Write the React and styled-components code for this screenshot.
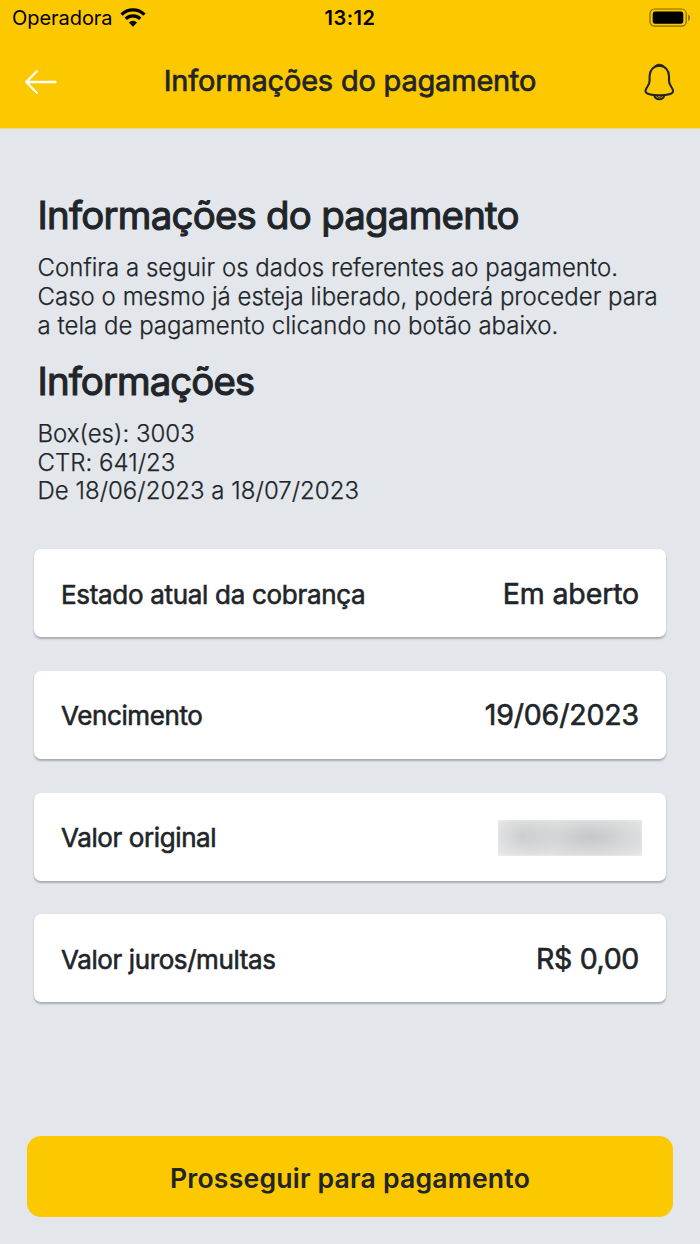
import React from "react";
import styled, { createGlobalStyle } from "styled-components";

const Global = createGlobalStyle`
  * { box-sizing: border-box; }
  body { margin: 0; background: #e3e7ec; }
`;

const Screen = styled.div`
  width: 700px;
  height: 1244px;
  display: flex;
  flex-direction: column;
  overflow: hidden;
  background: #e3e7ec;
  color: #212529;
  font-family: Inter, "Liberation Sans", sans-serif;
  white-space: nowrap;
`;

const Top = styled.header`
  height: 128px;
  flex: none;
  background: #fcc800;
  box-shadow: 0 1px 0 #f1dc8b;
`;

const StatusBar = styled.div`
  height: 36px;
  padding: 0 9px 0 12px;
  display: grid;
  grid-template-columns: 1fr auto 1fr;
  align-items: center;
  color: #000;
`;

const Carrier = styled.div`
  display: flex;
  align-items: center;
  gap: 7.5px;
  font-size: 20px;
  letter-spacing: -0.05px;
`;

const Clock = styled.div`
  font-size: 20px;
  font-weight: 600;
  letter-spacing: 0.5px;
  margin-right: 3px;
`;

const BatterySlot = styled.div`
  display: flex;
  justify-content: flex-end;
`;

const NavBar = styled.div`
  height: 92px;
  padding: 0 24px;
  display: grid;
  grid-template-columns: 36px 1fr 36px;
  align-items: center;
  svg { display: block; }
`;

const NavTitle = styled.div`
  text-align: center;
  font-size: 29px;
  line-height: 36px;
  padding-bottom: 2px;
  -webkit-text-stroke: 0.7px;
  letter-spacing: -0.2px;
`;

const Content = styled.main`
  padding: 62px 34px 0;
`;

const Intro = styled.section`
  padding: 0 3.5px;
`;

const Heading = styled.h1`
  margin: 0;
  font-size: 38.4px;
  line-height: 50px;
  font-weight: 400;
  -webkit-text-stroke: 1.1px;
  letter-spacing: ${(p) => p.$spacing || -0.76}px;
`;

const Copy = styled.p`
  margin: 14.1px 0 15.2px;
  font-size: 24px;
  line-height: 28.8px;
  font-weight: 300;
  -webkit-text-stroke: 0.25px;
  letter-spacing: 0.02px;
`;

const Cards = styled.section`
  margin-top: 43.2px;
  display: flex;
  flex-direction: column;
  gap: 33.6px;
`;

const Card = styled.div`
  height: 88px;
  padding: 0 27px;
  display: flex;
  align-items: center;
  justify-content: space-between;
  background: #fff;
  border-radius: 7px;
  box-shadow: 0 1.5px 2px rgba(0, 0, 0, 0.26);
`;

const Label = styled.span`
  font-size: 26px;
  line-height: 34px;
  -webkit-text-stroke: 0.6px;
  letter-spacing: ${(p) => p.$spacing || -0.4}px;
  padding-top: 3px;
`;

const Value = styled.span`
  font-size: 28.5px;
  line-height: 34px;
  -webkit-text-stroke: 0.6px;
  letter-spacing: ${(p) => p.$spacing || -0.15}px;
  padding-top: 1px;
`;

const Redacted = styled.span`
  width: 144px;
  height: 36px;
  margin: 2px -3px 0 0;
  background:
    radial-gradient(ellipse 38px 28px at 24px 16px, rgba(190, 194, 196, 0.65), rgba(190, 194, 196, 0)),
    radial-gradient(ellipse 82px 30px at 92px 17px, rgba(190, 194, 196, 0.85), rgba(190, 194, 196, 0)),
    #eaebeb;
  box-shadow: inset 0 0 2px #f4f4f4;
`;

const Footer = styled.footer`
  margin-top: auto;
  padding: 0 27px 27px;
`;

const Submit = styled.button`
  display: block;
  width: 100%;
  height: 81.5px;
  padding: 3px 0 0;
  border: 0;
  border-radius: 14px;
  background: #fcc800;
  color: #212529;
  font: 600 26.6px/32px Inter, "Liberation Sans", sans-serif;
  letter-spacing: 0.2px;
`;

const Wifi = () => (
  <svg width="26" height="20" viewBox="0 0 26 20">
    <g fill="none" stroke="#000" strokeWidth="3.3">
      <path d="M1.5 6.6a16.3 16.3 0 0 1 23 0" />
      <path d="M5.7 10.8a10.4 10.4 0 0 1 14.6 0" />
    </g>
    <path d="M8.9 14.5a5.8 5.8 0 0 1 8.2 0L13 18.7z" fill="#000" />
  </svg>
);

const Battery = () => (
  <svg width="42" height="20" viewBox="0 0 42 20">
    <rect x="1" y="1" width="36.2" height="17.2" rx="4.6" fill="none" stroke="#000" strokeOpacity=".48" strokeWidth="1.2" />
    <rect x="3.7" y="3.6" width="30.6" height="12.2" rx="2.4" fill="#000" />
    <path d="M39.2 6.4c2.2 1.3 2.2 5.3 0 6.6z" fill="#000" fillOpacity=".5" />
  </svg>
);

const BackArrow = () => (
  <svg width="36" height="28" viewBox="0 0 36 28" fill="none" stroke="#fff" strokeWidth="2.3" strokeLinecap="round" strokeLinejoin="round">
    <path d="M31.5 14H2.2M12.8 3.3L2.2 14l10.6 10.7" />
  </svg>
);

const Bell = () => (
  <svg width="36" height="40" viewBox="0 0 36 40" fill="none" stroke="#212529" strokeWidth="2.1" strokeLinejoin="round">
    <path d="M19.3 3.8c-6 0-9.7 4.6-9.7 10.4v4.6c0 5.4-4.1 6.6-4.1 10.2 0 3.1 6.3 4.2 13.8 4.2s13.8-1.1 13.8-4.2c0-3.6-4.1-4.8-4.1-10.2v-4.6c0-5.8-3.7-10.4-9.7-10.4z" />
    <path d="M14.8 4.2c1.3-2.6 7.7-2.6 9 0z" fill="#212529" strokeWidth="0.8" />
    <path d="M14.4 33.6c1 4.8 8.8 4.8 9.8 0" />
    <path d="M16.7 34.2c1 1.4 4.2 1.4 5.2 0" strokeWidth="1.1" />
  </svg>
);

export default function App() {
  return (
    <Screen>
      <Global />
      <Top>
        <StatusBar>
          <Carrier>Operadora <Wifi /></Carrier>
          <Clock>13:12</Clock>
          <BatterySlot><Battery /></BatterySlot>
        </StatusBar>
        <NavBar>
          <BackArrow />
          <NavTitle>Informações do pagamento</NavTitle>
          <Bell />
        </NavBar>
      </Top>
      <Content>
        <Intro>
          <Heading>Informações do pagamento</Heading>
          <Copy>
            Confira a seguir os dados referentes ao pagamento.<br />
            Caso o mesmo já esteja liberado, poderá proceder para<br />
            a tela de pagamento clicando no botão abaixo.
          </Copy>
          <Heading as="h2" $spacing={-0.93}>Informações</Heading>
          <Copy>
            Box(es): 3003<br />
            CTR: 641/23<br />
            De 18/06/2023 a 18/07/2023
          </Copy>
        </Intro>
        <Cards>
          <Card><Label $spacing={-0.31}>Estado atual da cobrança</Label><Value>Em aberto</Value></Card>
          <Card><Label>Vencimento</Label><Value>19/06/2023</Value></Card>
          <Card><Label>Valor original</Label><Redacted /></Card>
          <Card><Label>Valor juros/multas</Label><Value $spacing={-0.35}>R$ 0,00</Value></Card>
        </Cards>
      </Content>
      <Footer>
        <Submit>Prosseguir para pagamento</Submit>
      </Footer>
    </Screen>
  );
}
